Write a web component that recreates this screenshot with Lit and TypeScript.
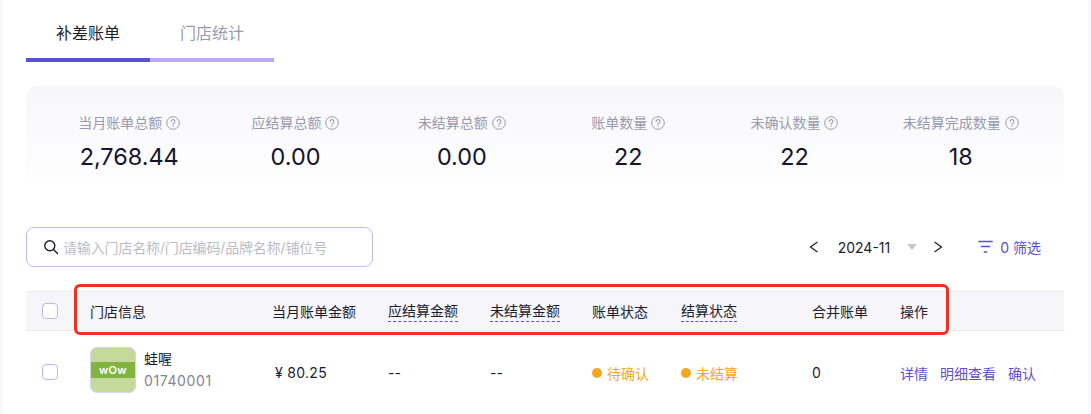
import { LitElement, html, css, svg } from "lit";
import { customElement } from "lit/decorators.js";

const help = html`<svg class="help" viewBox="0 0 14 14" width="14" height="14" fill="none" stroke="currentColor">
  <circle cx="7" cy="7" r="6.3" stroke-width="1"></circle>
  <path d="M5.2 5.5a1.85 1.85 0 1 1 2.9 1.5c-.7.45-1.1.8-1.1 1.6" stroke-width="1.05" stroke-linecap="round"></path>
  <circle cx="7" cy="10.3" r="0.65" fill="currentColor" stroke="none"></circle>
</svg>`;

const chev = (d: string) => svg`<svg width="10" height="12" viewBox="0 0 10 12" fill="none" stroke="#1f1f33" stroke-width="1.3"><path d="${d}"></path></svg>`;

const stats = [
  ["当月账单总额", "2,768.44"],
  ["应结算总额", "0.00"],
  ["未结算总额", "0.00"],
  ["账单数量", "22"],
  ["未确认数量", "22"],
  ["未结算完成数量", "18"],
];

@customElement("app-root")
export class AppRoot extends LitElement {
  static styles = css`
    :host {
      display: block;
      height: 414px;
      overflow: hidden;
      background: #f9f8fe;
      font-family: Inter, "Noto Sans CJK SC", sans-serif;
      color: #1c1c30;
    }
    .page {
      position: relative;
      margin: 0 3px 0 2px;
      height: 414px;
      background: #fff;
      padding: 0 24px 0 24px;
      box-sizing: border-box;
      overflow: hidden;
    }
    .tabs { display: flex; height: 62px; }
    .tab {
      width: 124px;
      box-sizing: border-box;
      height: 62px;
      padding-top: 21px;
      line-height: 24px;
      font-size: 16px;
      text-align: center;
      color: #1c1c30;
      border-bottom: 4px solid #5a50d2;
    }
    .tab.off { color: #9a9aae; border-bottom-color: #baa9f2; }
    .stats {
      margin-top: 24px;
      height: 104px;
      padding: 25px 20px 0;
      box-sizing: border-box;
      border-radius: 10px;
      background: linear-gradient(#f7f6fb, #ffffff);
      display: grid;
      grid-template-columns: repeat(6, 1fr);
    }
    .stat { display: flex; flex-direction: column; align-items: center; }
    .label {
      display: flex;
      align-items: center;
      gap: 4px;
      font-size: 14px;
      line-height: 24px;
      color: #9a9aae;
    }
    .help { color: #9a9aae; flex: none; }
    .value { font-size: 23.4px; line-height: 32px; margin-top: 6px; color: #14142b; }
    .toolbar {
      margin-top: 37px;
      height: 40px;
      display: flex;
      align-items: center;
    }
    .search {
      width: 347px;
      height: 40px;
      box-sizing: border-box;
      border: 1px solid #c4b9f5;
      border-radius: 8px;
      display: flex;
      align-items: center;
      padding-left: 16px;
      gap: 4px;
      font-size: 14px;
      letter-spacing: -0.15px;
      color: #bcbcc6;
    }
    .date {
      margin-left: auto;
      display: flex;
      align-items: center;
      font-size: 14px;
      color: #1c1c30;
    }
    .date .txt { margin: 0 17px 0 19px; }
    .caret {
      width: 0; height: 0;
      border-left: 5px solid transparent;
      border-right: 5px solid transparent;
      border-top: 6px solid #c6c6ce;
      margin-right: 16px;
    }
    .filter {
      margin-left: 35px;
      margin-right: 23px;
      display: flex;
      align-items: center;
      gap: 7px;
      font-size: 14px;
      color: #5a50d2;
    }
    .row {
      display: grid;
      grid-template-columns: 64px 182px 116px 102px 102px 89px 131px 88px 1fr;
      align-items: center;
      font-size: 14px;
    }
    .head {
      margin-top: 24px;
      height: 40px;
      box-sizing: border-box;
      background: #f5f5fa;
      border-top: 1px solid #ececf0;
      border-bottom: 1px solid #ececf0;
      color: #1c1c30;
    }
    .body { height: 83px; }
    .check {
      width: 16px;
      height: 16px;
      box-sizing: border-box;
      margin-left: 16px;
      border: 1px solid #c0b4f4;
      border-radius: 4px;
      background: #fff;
    }
    .body .check { margin-top: -1px; }
    .dash span {
      display: inline-block;
      line-height: 20px;
      border-bottom: 1px dashed #5a50d2;
    }
    .store { display: flex; align-items: center; gap: 8px; padding-bottom: 5px; }
    .logo {
      width: 46px;
      height: 46px;
      box-sizing: border-box;
      border: 1px solid #d6d3ee;
      border-radius: 7px;
      background: #c4d99b;
      display: flex;
      align-items: center;
    }
    .band {
      flex: 1;
      height: 16px;
      background: #82b540;
      color: #fff;
      font-size: 11px;
      font-weight: 600;
      line-height: 16px;
      text-align: center;
      letter-spacing: 0.3px;
    }
    .name { line-height: 22px; color: #1c1c30; }
    .code { line-height: 22px; color: #83839a; letter-spacing: 0.6px; }
    .status { display: flex; align-items: center; gap: 5px; color: #f5a623; }
    .dot { width: 10px; height: 10px; border-radius: 50%; background: #f5a623; flex: none; }
    .ops { display: flex; gap: 12px; color: #5a50d2; white-space: nowrap; }
    .amount { padding-left: 3px; letter-spacing: 0.3px; }
    .mark {
      position: absolute;
      left: 72px;
      top: 284px;
      width: 875px;
      height: 51px;
      box-sizing: border-box;
      border: 3px solid #f42f1c;
      border-radius: 6px;
      pointer-events: none;
    }
  `;

  render() {
    return html`<div class="page">
      <div class="tabs">
        <div class="tab">补差账单</div>
        <div class="tab off">门店统计</div>
      </div>
      <div class="stats">
        ${stats.map(
          ([l, v]) => html`<div class="stat">
            <div class="label">${l}${help}</div>
            <div class="value">${v}</div>
          </div>`
        )}
      </div>
      <div class="toolbar">
        <div class="search">
          <svg width="16" height="16" viewBox="0 0 16 16" fill="none" stroke="#1c1c30" stroke-width="1.4">
            <circle cx="6.8" cy="6.8" r="5"></circle>
            <path d="M10.5 10.5 14.5 14.5" stroke-linecap="round"></path>
          </svg>
          请输入门店名称/门店编码/品牌名称/铺位号
        </div>
        <div class="date">
          ${chev("M8.5 1 1.5 6l7 5")}
          <span class="txt">2024-11</span>
          <span class="caret"></span>
          ${chev("M1.5 1 8.5 6l-7 5")}
        </div>
        <div class="filter">
          <svg width="15" height="14" viewBox="0 0 15 14" fill="none" stroke="#5a50d2" stroke-width="1.7" stroke-linecap="round">
            <path d="M1 1.5h13M3.5 6.5h8M6.5 12h2"></path>
          </svg>
          <span>0 筛选</span>
        </div>
      </div>
      <div class="row head">
        <div><div class="check"></div></div>
        <div>门店信息</div>
        <div>当月账单金额</div>
        <div class="dash"><span>应结算金额</span></div>
        <div class="dash"><span>未结算金额</span></div>
        <div>账单状态</div>
        <div class="dash"><span>结算状态</span></div>
        <div>合并账单</div>
        <div>操作</div>
      </div>
      <div class="row body">
        <div><div class="check"></div></div>
        <div class="store">
          <div class="logo"><div class="band">wOw</div></div>
          <div>
            <div class="name">蛙喔</div>
            <div class="code">01740001</div>
          </div>
        </div>
        <div class="amount">¥ 80.25</div>
        <div>--</div>
        <div>--</div>
        <div class="status"><i class="dot"></i>待确认</div>
        <div class="status"><i class="dot"></i>未结算</div>
        <div>0</div>
        <div class="ops"><span>详情</span><span>明细查看</span><span>确认</span></div>
      </div>
      <div class="mark"></div>
    </div>`;
  }
}
